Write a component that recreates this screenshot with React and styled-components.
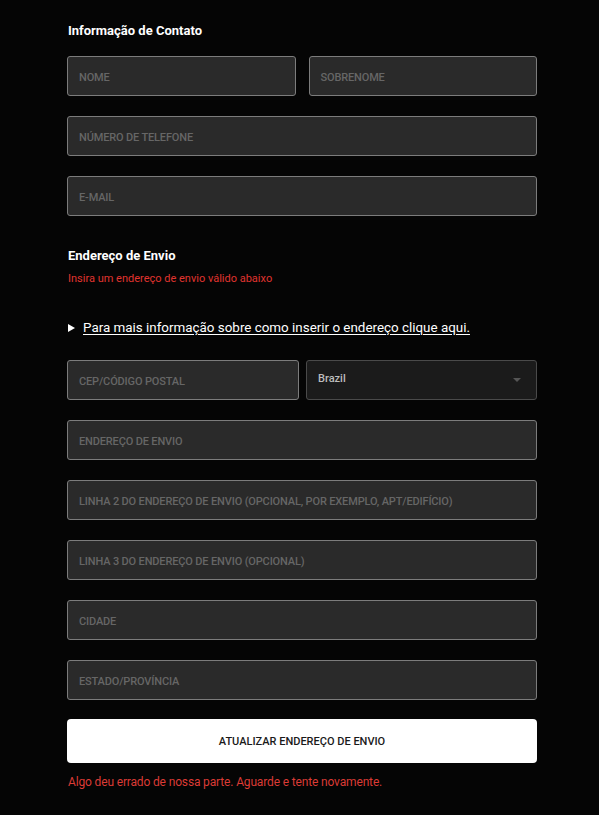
import styled, { createGlobalStyle } from "styled-components";

const Global = createGlobalStyle`
  html, body {
    margin: 0;
    background: #050505;
  }
  body {
    font-family: Roboto, "Liberation Sans", sans-serif;
  }
  * { box-sizing: border-box; }
`;

const Page = styled.div`
  width: 470px;
  margin-left: 67px;
  padding: 23px 0 24px;
  display: flex;
  flex-direction: column;
`;

const Section = styled.section`
  display: flex;
  flex-direction: column;
  gap: 20px;
  margin-bottom: ${(p) => p.$mb || 0}px;
`;

const Title = styled.h3`
  margin: 0 0 -3px 1px;
  font-size: 13px;
  line-height: 16px;
  font-weight: 700;
  color: #ffffff;
`;

const Row = styled.div`
  display: grid;
  grid-template-columns: ${(p) => p.$cols || "1fr 1fr"};
  gap: ${(p) => p.$gap || 13}px;
`;

const Field = styled.div`
  height: 40px;
  border: 1px solid #7c7c7c;
  border-radius: 3px;
  background: #2a2a2a;
  display: flex;
  align-items: center;
  padding: 2px 11px 0;
  font-size: 11px;
  font-weight: 500;
  letter-spacing: -0.15px;
  color: #666666;
  white-space: nowrap;
`;

const Select = styled(Field)`
  background: #1b1b1b;
  border-color: #4a4a4a;
  color: #bdbdbd;
  justify-content: space-between;
  padding: 0 11px 3px;
  letter-spacing: 0;
`;

const Caret = styled.span`
  width: 0;
  height: 0;
  border-left: 4px solid transparent;
  border-right: 4px solid transparent;
  border-top: 4px solid #555;
  margin: 3px 4px 0 0;
`;

const Warning = styled.p`
  margin: -9px 0 0 1px;
  font-size: 11px;
  line-height: 14px;
  color: #e0342f;
`;

const Details = styled.div`
  display: flex;
  align-items: center;
  gap: 8px;
  margin: 14px 0 5px 1px;
  font-size: 13.4px;
  color: #ffffff;
`;

const Arrow = styled.span`
  width: 0;
  height: 0;
  border-top: 4.5px solid transparent;
  border-bottom: 4.5px solid transparent;
  border-left: 7px solid #ffffff;
`;

const Link = styled.a`
  color: #ffffff;
  text-decoration: underline;
  text-underline-offset: 2px;
`;

const Button = styled.button`
  height: 44px;
  margin-top: 19px;
  border: none;
  border-radius: 4px;
  background: #ffffff;
  color: #1a1a1a;
  font-family: Roboto, "Liberation Sans", sans-serif;
  font-size: 11px;
  font-weight: 500;
  cursor: pointer;
`;

const Error = styled.p`
  margin: 12px 0 0 1px;
  font-size: 12px;
  letter-spacing: -0.15px;
  color: #dc3b35;
`;

export default function App() {
  return (
    <Page>
      <Global />
      <Section $mb={32}>
        <Title>Informação de Contato</Title>
        <Row>
          <Field>NOME</Field>
          <Field>SOBRENOME</Field>
        </Row>
        <Field>NÚMERO DE TELEFONE</Field>
        <Field>E-MAIL</Field>
      </Section>
      <Section>
        <Title>Endereço de Envio</Title>
        <Warning>Insira um endereço de envio válido abaixo</Warning>
        <Details>
          <Arrow />
          <Link href="#">Para mais informação sobre como inserir o endereço clique aqui.</Link>
        </Details>
        <Row $cols="232px 1fr" $gap={7}>
          <Field>CEP/CÓDIGO POSTAL</Field>
          <Select>
            Brazil
            <Caret />
          </Select>
        </Row>
        <Field>ENDEREÇO DE ENVIO</Field>
        <Field>LINHA 2 DO ENDEREÇO DE ENVIO (OPCIONAL, POR EXEMPLO, APT/EDIFÍCIO)</Field>
        <Field>LINHA 3 DO ENDEREÇO DE ENVIO (OPCIONAL)</Field>
        <Field>CIDADE</Field>
        <Field>ESTADO/PROVÍNCIA</Field>
      </Section>
      <Button>ATUALIZAR ENDEREÇO DE ENVIO</Button>
      <Error>Algo deu errado de nossa parte. Aguarde e tente novamente.</Error>
    </Page>
  );
}
